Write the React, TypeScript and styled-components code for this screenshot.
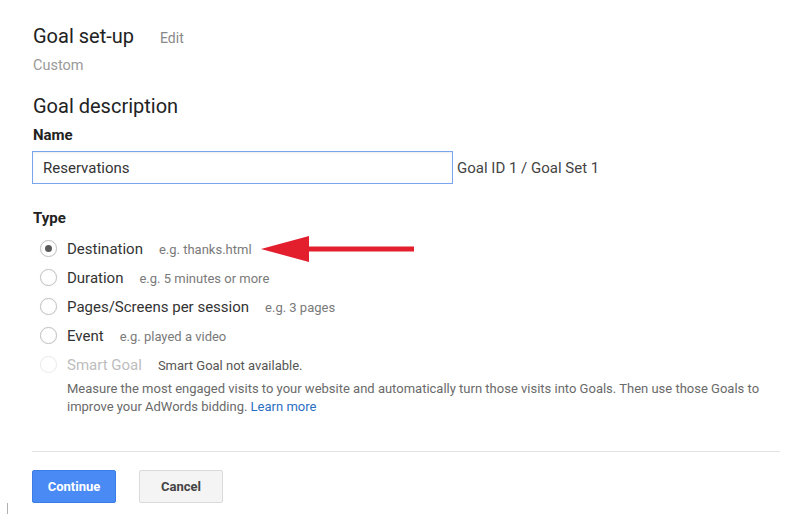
import React from 'react';
import styled, { createGlobalStyle } from 'styled-components';

const GlobalStyle = createGlobalStyle`
  html, body {
    margin: 0;
    padding: 0;
    background: #ffffff;
  }
  body {
    font-family: Roboto, "Noto Sans", Arial, sans-serif;
    color: #333333;
  }
`;

const Page = styled.div`
  position: relative;
  width: 800px;
  height: 520px;
  box-sizing: border-box;
  padding: 24px 20px 0 32px;
  overflow: hidden;
`;

const HeaderRow = styled.div`
  display: flex;
  align-items: baseline;
  gap: 26px;
  line-height: 24px;
`;

const Heading = styled.h2`
  margin: 0;
  font-size: 20px;
  font-weight: 400;
  line-height: 24px;
  color: #222222;
  padding-left: 1px;
`;

const EditLink = styled.span`
  font-size: 14px;
  color: #888888;
`;

const SubText = styled.div`
  margin-top: 6px;
  padding-left: 1px;
  font-size: 14.5px;
  line-height: 20px;
  color: #9a9a9a;
`;

const Section = styled.div<{ $top: number }>`
  margin-top: ${(p) => p.$top}px;
`;

const FieldLabel = styled.div<{ $top?: number }>`
  margin-top: ${(p) => p.$top ?? 0}px;
  padding-left: 1px;
  font-size: 15px;
  font-weight: 700;
  line-height: 20px;
  color: #222222;
`;

const InputRow = styled.div`
  display: flex;
  align-items: center;
  gap: 4px;
  margin-top: 6px;
`;

const NameInput = styled.div`
  width: 421px;
  height: 33px;
  box-sizing: border-box;
  border: 1px solid #79a6ef;
  box-shadow: inset 0 1px 2px rgba(0, 0, 0, 0.08);
  padding: 0 10px;
  display: flex;
  align-items: center;
  font-size: 15px;
  color: #333333;
`;

const GoalId = styled.span`
  font-size: 15px;
  color: #444444;
`;

const RadioList = styled.div`
  margin-top: 6px;
  padding-left: 8px;
  display: flex;
  flex-direction: column;
`;

const RadioRow = styled.div`
  height: 29px;
  display: flex;
  align-items: center;
`;

const Radio = styled.span<{ $checked?: boolean; $disabled?: boolean }>`
  width: 17px;
  height: 17px;
  box-sizing: border-box;
  border-radius: 50%;
  border: 1px solid ${(p) => (p.$disabled ? '#ececec' : '#c4c4c4')};
  box-shadow: 0 0 1px ${(p) => (p.$disabled ? '#f2f2f2' : '#dddddd')};
  background: #ffffff;
  display: flex;
  align-items: center;
  justify-content: center;
  margin-right: 10px;
  flex-shrink: 0;

  &::after {
    content: '';
    display: ${(p) => (p.$checked ? 'block' : 'none')};
    width: 7px;
    height: 7px;
    border-radius: 50%;
    background: #5a5a5a;
  }
`;

const OptionText = styled.div`
  display: flex;
  align-items: baseline;
  gap: 16px;
`;

const OptionLabel = styled.span<{ $disabled?: boolean }>`
  font-size: 15px;
  color: ${(p) => (p.$disabled ? '#bdbdbd' : '#333333')};
`;

const Hint = styled.span<{ $dark?: boolean }>`
  font-size: 13px;
  color: ${(p) => (p.$dark ? '#555555' : '#7a7a7a')};
`;

const Arrow = styled.svg`
  margin-left: 9px;
  flex-shrink: 0;
`;

const Description = styled.p`
  margin: 1px 0 0 35px;
  font-size: 13px;
  line-height: 18px;
  color: #6a6a6a;
`;

const LearnMore = styled.a`
  color: #2a6fc2;
  text-decoration: none;
`;

const Divider = styled.hr`
  margin: 35px 0 0 0;
  width: 748px;
  border: none;
  border-top: 1px solid #e3e3e3;
`;

const ButtonRow = styled.div`
  display: flex;
  gap: 23px;
  margin-top: 18px;
`;

const Button = styled.button<{ $primary?: boolean }>`
  width: 84px;
  height: 33px;
  box-sizing: border-box;
  border-radius: 2px;
  font-family: Roboto, Arial, sans-serif;
  font-size: 13px;
  font-weight: 700;
  cursor: pointer;
  border: 1px solid ${(p) => (p.$primary ? '#3b7de8' : '#dadada')};
  background: ${(p) => (p.$primary ? '#4a8af4' : '#f4f4f4')};
  color: ${(p) => (p.$primary ? '#ffffff' : '#444444')};
`;

const CaretMark = styled.span`
  position: absolute;
  left: 7px;
  top: 503px;
  width: 1px;
  height: 11px;
  background: #b0b0b0;
`;

const options = [
  { label: 'Destination', hint: 'e.g. thanks.html', checked: true },
  { label: 'Duration', hint: 'e.g. 5 minutes or more' },
  { label: 'Pages/Screens per session', hint: 'e.g. 3 pages' },
  { label: 'Event', hint: 'e.g. played a video' },
];

const App = (): JSX.Element => {
  return (
    <Page>
      <GlobalStyle />
      <HeaderRow>
        <Heading>Goal set-up</Heading>
        <EditLink>Edit</EditLink>
      </HeaderRow>
      <SubText>Custom</SubText>

      <Section $top={18}>
        <Heading>Goal description</Heading>
        <FieldLabel $top={7}>Name</FieldLabel>
        <InputRow>
          <NameInput>Reservations</NameInput>
          <GoalId>Goal ID 1 / Goal Set 1</GoalId>
        </InputRow>
      </Section>

      <Section $top={24}>
        <FieldLabel>Type</FieldLabel>
        <RadioList>
          {options.map((o) => (
            <RadioRow key={o.label}>
              <Radio $checked={o.checked} />
              <OptionText>
                <OptionLabel>{o.label}</OptionLabel>
                <Hint>{o.hint}</Hint>
              </OptionText>
              {o.checked && (
                <Arrow width="153" height="26" viewBox="0 0 153 26">
                  <polygon points="0,13 48,0 48,26" fill="#e31e2d" />
                  <rect x="46" y="10.5" width="107" height="5" fill="#e31e2d" />
                </Arrow>
              )}
            </RadioRow>
          ))}
          <RadioRow>
            <Radio $disabled />
            <OptionText>
              <OptionLabel $disabled>Smart Goal</OptionLabel>
              <Hint $dark>Smart Goal not available.</Hint>
            </OptionText>
          </RadioRow>
        </RadioList>
        <Description>
          Measure the most engaged visits to your website and automatically turn those visits into
          Goals. Then use those Goals to improve your AdWords bidding.{' '}
          <LearnMore href="#">Learn more</LearnMore>
        </Description>
      </Section>

      <Divider />
      <ButtonRow>
        <Button $primary>Continue</Button>
        <Button>Cancel</Button>
      </ButtonRow>
      <CaretMark />
    </Page>
  );
};

export default App;
